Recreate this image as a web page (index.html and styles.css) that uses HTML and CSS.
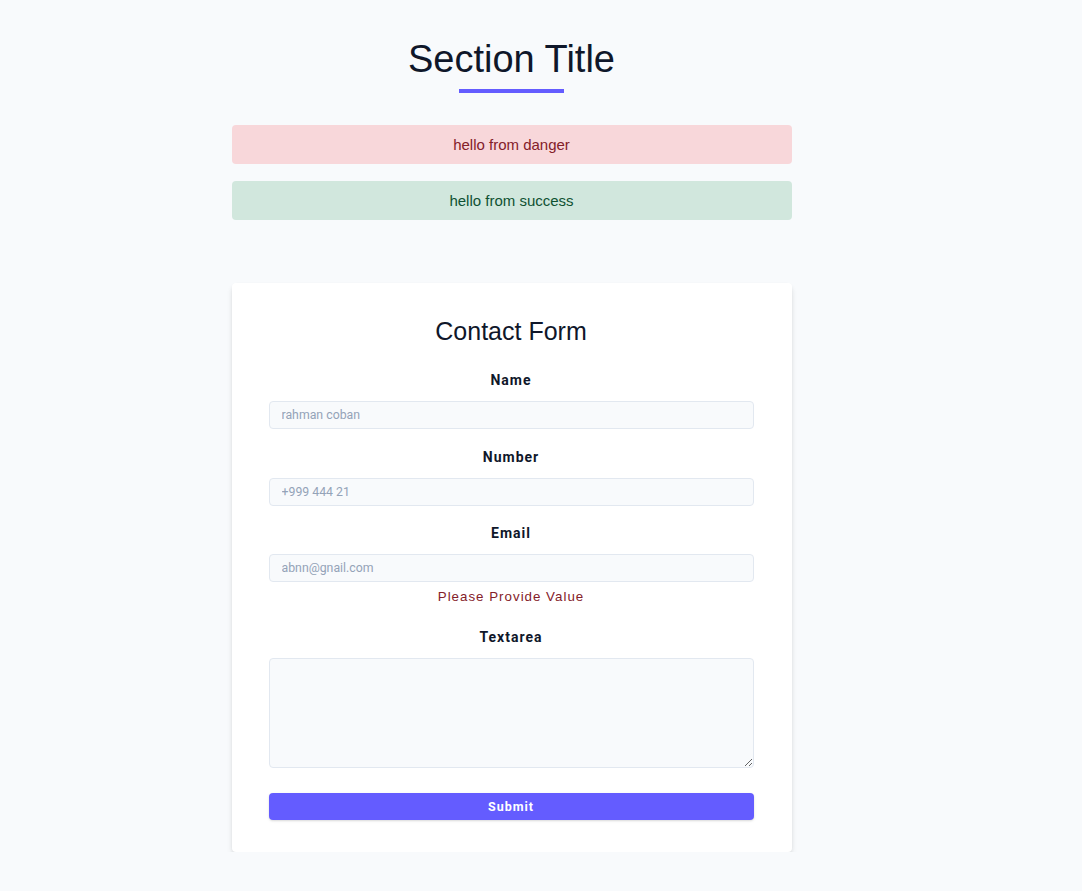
FILE: index.html
```html
<!DOCTYPE html>
<html lang="en">
<head>
<meta charset="utf-8">
<title>Section Title</title>
<link rel="stylesheet" href="styles.css">
</head>
<body>
<main class="page">
  <section class="section">
    <h2 class="title">Section Title</h2>
    <div class="title-underline"></div>
    <div class="alerts">
      <div class="alert alert-danger">hello from danger</div>
      <div class="alert alert-success">hello from success</div>
    </div>
    <form class="form">
      <h4 class="form-title">Contact Form</h4>
      <div class="form-row">
        <label class="form-label" for="name">Name</label>
        <input class="form-input" id="name" type="text" placeholder="rahman coban">
      </div>
      <div class="form-row">
        <label class="form-label" for="number">Number</label>
        <input class="form-input" id="number" type="text" placeholder="+999 444 21">
      </div>
      <div class="form-row form-row-error">
        <label class="form-label" for="email">Email</label>
        <input class="form-input" id="email" type="email" placeholder="abnn@gnail.com">
        <p class="form-alert">Please Provide Value</p>
      </div>
      <div class="form-row form-row-area">
        <label class="form-label" for="textarea">Textarea</label>
        <textarea class="form-textarea" id="textarea"></textarea>
      </div>
      <button type="submit" class="btn btn-block">Submit</button>
    </form>
  </section>
</main>
</body>
</html>
```

FILE: styles.css
```css
* {
  box-sizing: border-box;
  margin: 0;
  padding: 0;
}

body {
  margin: 0;
  background: #f8fafc;
  color: #0f172a;
  font-family: Roboto, "Liberation Sans", Arial, sans-serif;
}

.page {
  width: 1023px;
  padding-top: 34px;
}

.section {
  display: flex;
  flex-direction: column;
  align-items: center;
}

.title {
  font-family: "Liberation Sans", Arial, sans-serif;
  font-size: 38px;
  font-weight: 400;
  line-height: 51px;
  text-align: center;
  color: #0f172a;
}

.title-underline {
  width: 105px;
  height: 4px;
  margin-top: 4px;
  background: #645cff;
}

.alerts {
  width: 560px;
  margin-top: 32px;
  display: flex;
  flex-direction: column;
  gap: 17px;
}

.alert {
  border: 1px solid transparent;
  border-radius: 4px;
  padding: 6px 12px;
  font-family: "Liberation Sans", Arial, sans-serif;
  font-size: 15px;
  line-height: 25px;
  text-align: center;
}

.alert-danger {
  color: #842029;
  background: #f8d7da;
}

.alert-success {
  color: #0f5132;
  background: #d1e7dd;
}

.form {
  width: 560px;
  margin-top: 63px;
  background: #ffffff;
  border-radius: 4px;
  box-shadow: 0 4px 6px -1px rgba(0, 0, 0, 0.12), 0 2px 4px -1px rgba(0, 0, 0, 0.08);
  padding: 32px 38px 32px 37px;
  display: flex;
  flex-direction: column;
}

.form-title {
  font-family: "Liberation Sans", Arial, sans-serif;
  font-size: 25px;
  font-weight: 400;
  line-height: 32.5px;
  text-align: center;
  margin-bottom: 22.5px;
}

.form-row {
  display: flex;
  flex-direction: column;
  margin-bottom: 17.5px;
}

.form-label {
  display: block;
  font-size: 14px;
  font-weight: 700;
  line-height: 21px;
  letter-spacing: 1px;
  text-align: center;
  margin-bottom: 10px;
}

.form-input,
.form-textarea {
  display: block;
  width: 100%;
  height: 28px;
  padding: 0 12px;
  border: 1px solid #e2e8f0;
  border-radius: 4px;
  background: #f8fafc;
  font-family: Roboto, "Liberation Sans", Arial, sans-serif;
  font-size: 12.3px;
  color: #0f172a;
}

.form-input::placeholder {
  color: #94a3b8;
}

.form-textarea {
  height: 110px;
  padding: 6px 12px;
}

.form-alert {
  font-family: "Liberation Sans", Arial, sans-serif;
  font-size: 13.33px;
  line-height: 21px;
  letter-spacing: 1px;
  text-align: center;
  color: #842029;
  margin-top: 3.5px;
}

.form-row-error {
  margin-bottom: 20px;
}

.form-row-area {
  margin-bottom: 25px;
}

.btn {
  cursor: pointer;
  color: #ffffff;
  background: #645cff;
  border: transparent;
  border-radius: 4px;
  letter-spacing: 1px;
  padding: 0 12px;
  height: 27px;
  box-shadow: 0 1px 3px 0 rgba(0, 0, 0, 0.1), 0 1px 2px 0 rgba(0, 0, 0, 0.06);
  font-family: Roboto, "Liberation Sans", Arial, sans-serif;
  font-size: 12.5px;
  font-weight: 700;
}

.btn-block {
  width: 100%;
}
```
